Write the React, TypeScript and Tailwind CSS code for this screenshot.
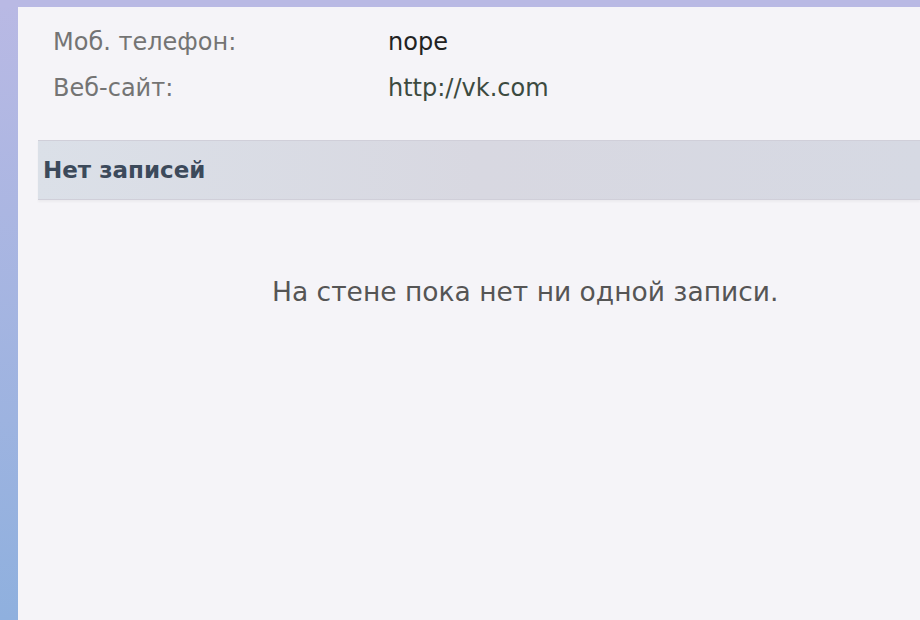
import React from "react";

const font = { fontFamily: '"DejaVu Sans", Verdana, sans-serif' };

function InfoRow({ label, value, valueClass }: { label: string; value: string; valueClass: string }) {
  return (
    <div className="flex h-[46px] items-center">
      <div className="w-[335px] text-[24px] leading-none text-[#747474]">{label}</div>
      <div className={`text-[24px] leading-none ${valueClass}`}>{value}</div>
    </div>
  );
}

export default function App() {
  return (
    <div
      className="flex h-[620px] w-[920px] flex-col overflow-hidden bg-gradient-to-b from-[#b9b9e4] to-[#8fb0de]"
      style={font}
    >
      <div className="h-[7px] shrink-0 bg-[#b9b9e4]" />
      <div className="flex min-h-0 flex-1">
        <div className="w-[18px] shrink-0" />
        <main className="flex-1 bg-[#f5f4f8] pt-[12px]">
          <section className="pl-[35px]">
            <InfoRow label="Моб. телефон:" value="nope" valueClass="text-[#222]" />
            <InfoRow label="Веб-сайт:" value="http://vk.com" valueClass="text-[#3c4a40]" />
          </section>

          <div className="ml-[20px] mt-[29px] flex h-[60px] items-center border-y border-[#d0cfd9] bg-gradient-to-r from-[#dbe0e8] via-[#d8d8e1] to-[#d6d9e3] pl-[5px] shadow-[0_2px_2px_rgba(0,0,0,0.04)]">
            <h2 className="text-[23px] font-bold leading-none text-[#3c4a5b]">Нет записей</h2>
          </div>

          <p className="mt-[79px] pl-[254px] text-[26.5px] leading-none text-[#555555]">
            На стене пока нет ни одной записи.
          </p>
        </main>
      </div>
    </div>
  );
}
